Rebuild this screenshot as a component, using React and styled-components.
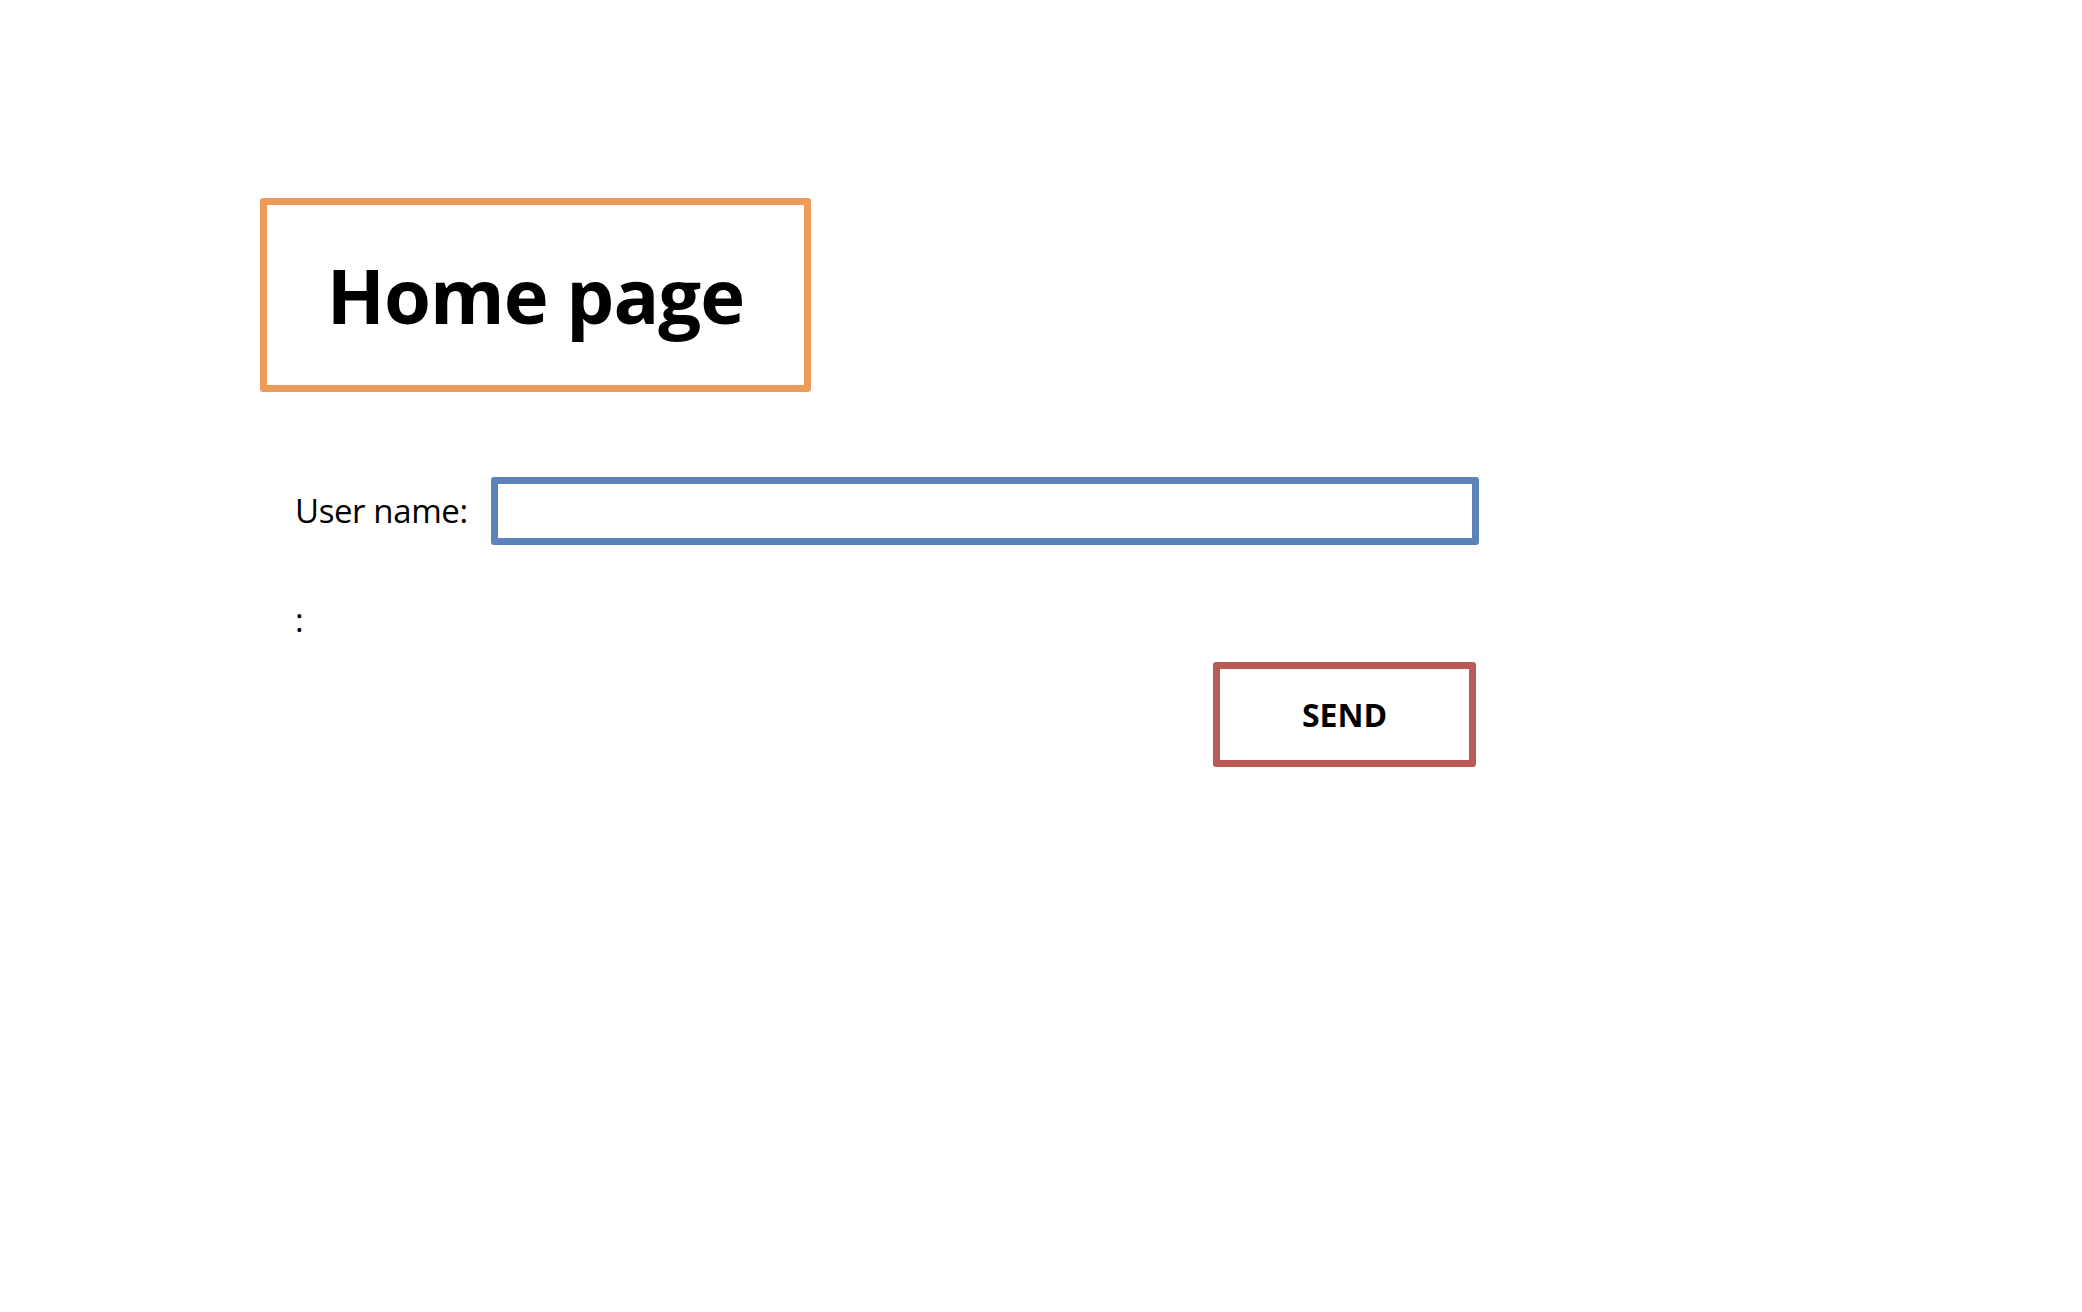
import React from "react";
import styled, { createGlobalStyle } from "styled-components";

const Global = createGlobalStyle`
  body {
    margin: 0;
    background: #fff;
    font-family: "Open Sans", "Liberation Sans", sans-serif;
    color: #000;
  }
`;

const Page = styled.div`
  padding: 198px 0 0 260px;
  min-height: 1312px;
  box-sizing: border-box;
`;

const TitleBox = styled.div`
  box-sizing: border-box;
  width: 551px;
  height: 194px;
  border: 7px solid #ec9b58;
  border-radius: 3px;
  display: flex;
  align-items: center;
  justify-content: center;
  h1 {
    margin: 0;
    font-size: 76px;
    font-weight: 700;
    line-height: 1;
    letter-spacing: -1px;
  }
`;

const Form = styled.form`
  margin-top: 85px;
  padding-left: 35px;
  width: 1184px;
  display: flex;
  flex-direction: column;
`;

const Row = styled.div`
  display: grid;
  grid-template-columns: 196px 988px;
  align-items: center;
`;

const Label = styled.label`
  font-size: 33px;
  line-height: 40px;
  letter-spacing: -0.4px;
`;

const Input = styled.input`
  box-sizing: border-box;
  height: 68px;
  width: 100%;
  border: 7px solid #5b82ba;
  border-radius: 3px;
  outline: none;
  font: inherit;
  font-size: 30px;
  padding: 0 12px;
`;

const Note = styled.div`
  margin-top: 55px;
  font-size: 33px;
  line-height: 40px;
`;

const Actions = styled.div`
  display: flex;
  justify-content: flex-end;
  margin-top: 22px;
  padding-right: 3px;
`;

const SendButton = styled.button`
  box-sizing: border-box;
  width: 263px;
  height: 105px;
  background: #fff;
  border: 7px solid #b95a55;
  border-radius: 3px;
  font-family: "Open Sans", "Liberation Sans", sans-serif;
  font-size: 32px;
  font-weight: 700;
  color: #000;
  cursor: pointer;
  padding: 0;
`;

export default function App() {
  return (
    <>
      <Global />
      <Page>
        <TitleBox>
          <h1>Home page</h1>
        </TitleBox>
        <Form onSubmit={(e) => e.preventDefault()}>
          <Row>
            <Label htmlFor="username">User name:</Label>
            <Input id="username" type="text" />
          </Row>
          <Note>:</Note>
          <Actions>
            <SendButton type="submit">SEND</SendButton>
          </Actions>
        </Form>
      </Page>
    </>
  );
}
